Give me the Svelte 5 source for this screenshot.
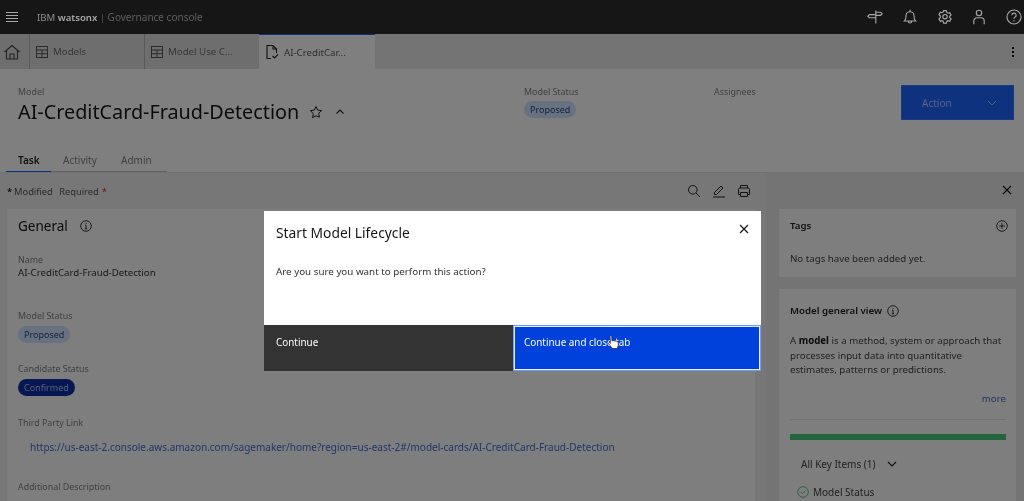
<script>
  let tabs = [
    { name: 'Models', icon: 'table' },
    { name: 'Model Use C...', icon: 'table' },
    { name: 'AI-CreditCar...', icon: 'doc', active: true }
  ];
  let pageTabs = ['Task', 'Activity', 'Admin'];
</script>

<div class="app">
  <header class="topbar">
    <svg class="menu" width="14" height="12" viewBox="0 0 14 12"><path d="M0 1.500h12M0 4.500h12M0 7.500h12M0 10.500h12" stroke="#a8a8a8" stroke-width="1"/></svg>
    <div class="brand">IBM <b>watsonx</b> <span class="bar">|</span> <span class="sub">Governance console</span></div>
    <div class="top-icons">
      <svg width="16" height="16" viewBox="0 0 20 20" fill="none" stroke="#a8a8a8" stroke-width="1.400"><path d="M11 2v16M11 4h6l2 2-2 2h-6M11 7H3L1 9l2 2h8"/></svg>
      <svg width="16" height="16" viewBox="0 0 20 20" fill="none" stroke="#a8a8a8" stroke-width="1.400"><path d="M3 15c1.800-1.500 2-3.500 2-6.500a5 5 0 0 1 10 0c0 3 .2 5 2 6.500zM8 15.500a2 2 0 0 0 4 0M10 1v2.500"/></svg>
      <svg width="16" height="16" viewBox="0 0 20 20" fill="none" stroke="#a8a8a8" stroke-width="1.400"><path d="M8.300 2.100h3.400l.5 2.200 1.500.9 2.200-.7 1.700 3-1.700 1.500v1.800l1.700 1.500-1.700 3-2.200-.7-1.500.9-.5 2.200H8.300l-.5-2.200-1.500-.9-2.200.7-1.700-3 1.700-1.500V8.400L2.400 6.900l1.700-3 2.200.7 1.500-.9z"/><circle cx="10" cy="9.600" r="2.800"/></svg>
      <svg width="16" height="16" viewBox="0 0 20 20" fill="none" stroke="#a8a8a8" stroke-width="1.400"><circle cx="10" cy="5" r="3.400"/><path d="M3.500 19v-4a4 4 0 0 1 4-4h5a4 4 0 0 1 4 4v4"/></svg>
      <svg width="16" height="16" viewBox="0 0 20 20" fill="none" stroke="#a8a8a8" stroke-width="1.400"><circle cx="10" cy="10" r="8.800"/><path d="M7.300 7.800a2.700 2.700 0 1 1 3.800 2.500c-.8.300-1.100.9-1.100 1.900M10 14v1.500"/></svg>
    </div>
  </header>

  <nav class="tabbar">
    <div class="tab home">
      <svg width="18" height="18" viewBox="0 0 18 18" fill="none" stroke="#444" stroke-width="1.100"><path d="M1.500 9 9 2.500 16.500 9M3.500 7.500V16h11V7.500M7 16v-5h4v5"/></svg>
    </div>
    {#each tabs as t}
      <div class="tab" class:active={t.active}>
        {#if t.icon === 'table'}
          <svg width="12" height="12" viewBox="0 0 12 12" fill="none" stroke="#555" stroke-width="1"><rect x=".5" y=".5" width="11" height="11"/><path d="M.5 4h11M.5 7.700h11M6 4v7.500"/></svg>
        {:else}
          <svg width="14" height="16" viewBox="0 0 14 16" fill="none" stroke="#222" stroke-width="1.100"><path d="M6 14.500H2V1.500h6l3.500 3.500v4M8 1.500V5h3.500M7.500 12l2 2 3.500-3.500"/></svg>
        {/if}
        <span>{t.name}</span>
      </div>
    {/each}
    <div class="kebab"><i></i><i></i><i></i></div>
  </nav>

  <section class="head">
    <div class="title-col">
      <div class="label">Model</div>
      <div class="title-row">
        <h1>AI-CreditCard-Fraud-Detection</h1>
        <svg width="14" height="14" viewBox="0 0 14 14" fill="none" stroke="#222" stroke-width="1"><path d="m7 1.500 1.700 3.600 3.800.5-2.800 2.700.7 3.900L7 10.800l-3.400 1.900.7-3.900L1.500 5.600l3.800-.5z"/></svg>
        <svg class="up" width="12" height="12" viewBox="0 0 12 12" fill="none" stroke="#222" stroke-width="1.100"><path d="m2.500 7.500 3.500-3.500 3.500 3.500"/></svg>
      </div>
    </div>
    <div class="status-col">
      <div class="label">Model Status</div>
      <span class="tag">Proposed</span>
    </div>
    <div class="assign-col"><div class="label">Assignees</div></div>
    <button class="action">
      <span>Action</span>
      <svg width="12" height="12" viewBox="0 0 12 12" fill="none" stroke="#b0c8ff" stroke-width="1"><path d="m2 4 4 4 4-4"/></svg>
    </button>
  </section>

  <div class="page-tabs">
    {#each pageTabs as p, i}
      <div class="ptab" class:on={i === 0}>{p}</div>
    {/each}
  </div>

  <div class="work">
    <main class="left">
      <div class="toolbar">
        <div class="legend"><b>*</b>Modified <span class="req">Required<em>*</em></span></div>
        <div class="tools">
          <svg width="14" height="14" viewBox="0 0 14 14" fill="none" stroke="#222" stroke-width="1"><circle cx="5.800" cy="5.800" r="4.300"/><path d="m9 9 4 4"/></svg>
          <svg width="14" height="14" viewBox="0 0 14 14" fill="none" stroke="#222" stroke-width="1"><path d="M1 13h12M2.500 10.500V8.500L9 2l2 2-6.500 6.500z"/></svg>
          <svg width="14" height="14" viewBox="0 0 14 14" fill="none" stroke="#222" stroke-width="1"><path d="M3.500 4V1.500h7V4M3.500 10.500H1.500V5.500a1.500 1.500 0 0 1 1.500-1.500h8a1.500 1.500 0 0 1 1.500 1.500v5h-2M3.500 8.500h7v4h-7z"/></svg>
        </div>
      </div>
      <div class="card general">
        <h2>General
          <svg width="12" height="12" viewBox="0 0 12 12" fill="none" stroke="#222" stroke-width=".9"><circle cx="6" cy="6" r="5.300"/><path d="M4.800 8.800h2.400M6 8.800V5.200H5M6 3v1"/></svg>
        </h2>
        <div class="field name"><div class="label">Name</div><div class="val">AI-CreditCard-Fraud-Detection</div></div>
        <div class="field"><div class="label">Model Status</div><span class="tag">Proposed</span></div>
        <div class="field cand"><div class="label">Candidate Status</div><span class="tag dark">Confirmed</span></div>
        <div class="field link"><div class="label">Third Party Link</div><div class="url">https://us-east-2.console.aws.amazon.com/sagemaker/home?region=us-east-2#/model-cards/AI-CreditCard-Fraud-Detection</div></div>
        <div class="label">Additional Description</div>
      </div>
    </main>
    <aside class="right">
      <div class="close-row">
        <svg width="12" height="12" viewBox="0 0 12 12" fill="none" stroke="#111" stroke-width="1.100"><path d="m2 2 8 8M10 2l-8 8"/></svg>
      </div>
      <div class="card tags">
        <div class="tags-head"><h3>Tags</h3>
          <svg width="12" height="12" viewBox="0 0 12 12" fill="none" stroke="#222" stroke-width=".9"><circle cx="6" cy="6" r="5.300"/><path d="M6 3v6M3 6h6"/></svg>
        </div>
        <p>No tags have been added yet.</p>
      </div>
      <div class="card view">
        <h3>Model general view
          <svg width="12" height="12" viewBox="0 0 12 12" fill="none" stroke="#222" stroke-width=".9"><circle cx="6" cy="6" r="5.300"/><path d="M4.800 8.800h2.400M6 8.800V5.200H5M6 3v1"/></svg>
        </h3>
        <p>A <b>model</b> is a method, system or approach that processes input data into quantitative estimates, patterns or predictions.</p>
        <div class="more">more</div>
        <div class="progress"></div>
        <div class="key">All Key Items (1)
          <svg width="12" height="12" viewBox="0 0 12 12" fill="none" stroke="#222" stroke-width="1.100"><path d="m2 4 4 4 4-4"/></svg>
        </div>
        <div class="item">
          <svg width="12" height="12" viewBox="0 0 12 12" fill="none" stroke="#4fc07a" stroke-width=".9"><circle cx="6" cy="6" r="5.300"/><path d="m3.500 6 1.800 1.800 3.200-3.200"/></svg>
          Model Status
        </div>
      </div>
    </aside>
  </div>

  <div class="overlay">
    <div class="modal">
      <div class="modal-body">
        <div class="modal-head">
          <h4>Start Model Lifecycle</h4>
          <svg width="10" height="10" viewBox="0 0 10 10" fill="none" stroke="#161616" stroke-width="1.200"><path d="m1 1 8 8M9 1 1 9"/></svg>
        </div>
        <p>Are you sure you want to perform this action?</p>
      </div>
      <div class="modal-foot">
        <button class="secondary">Continue</button>
        <button class="primary">Continue and close tab</button>
      </div>
      <svg class="cursor" width="13" height="15" viewBox="0 0 13 15"><path d="M3 1.200c.7-.7 1.600-.3 1.700.6l.2 4c1.500-.3 5.800.3 6.300 1.500.5 1.400 0 4-1 6.200H5.500L1.500 8.800c-.4-.9.700-1.600 1.600-.9l.5.500z" fill="#fff" stroke="#222" stroke-width=".7"/></svg>
    </div>
  </div>
</div>

<style>
  :global(body) {
    margin: 0;
    overflow: hidden;
  }
  .app {
    position: relative;
    width: 1024px;
    height: 501px;
    overflow: hidden;
    background: #fff;
    color: #161616;
    font-family: "Noto Sans", Roboto, sans-serif;
    font-size: 9.700px;
    filter: blur(.35px);
  }
  .topbar {
    display: flex;
    align-items: center;
    height: 34px;
    background: #161616;
  }
  .menu {
    margin-left: 6px;
  }
  .brand {
    margin-left: 17px;
    font-size: 9.600px;
    color: #8f8f8f;
  }
  .brand b {
    font-weight: 600;
    color: #a8a8a8;
  }
  .brand .bar {
    color: #555;
  }
  .brand .sub {
    color: #5f5f5f;
    font-size: 10px;
  }
  .top-icons {
    display: flex;
    gap: 18.700px;
    margin-left: auto;
    margin-right: 2px;
  }
  .tabbar {
    display: flex;
    height: 35px;
    background: #e9e9e9;
    align-items: stretch;
  }
  .tab {
    display: flex;
    align-items: center;
    gap: 5px;
    width: 115px;
    padding-left: 6px;
    box-sizing: border-box;
    background: #dcdcdc;
    border-left: 1px solid #b5b5b5;
    color: #6f6f6f;
  }
  .tab.home {
    width: 29px;
    padding-left: 3px;
    border-left: none;
  }
  .tab.active {
    width: 116px;
    background: #fff;
    border-left: none;
    border-top: 1px solid #0f62fe;
    color: #5a5a5a;
  }
  .kebab {
    margin-left: auto;
    margin-right: 10px;
    display: flex;
    flex-direction: column;
    justify-content: center;
    gap: 2px;
  }
  .kebab i {
    display: block;
    width: 2px;
    height: 2px;
    background: #111;
  }
  .head {
    display: flex;
    height: 70px;
    padding: 17px 10px 0 18px;
    box-sizing: border-box;
  }
  .label {
    font-size: 8.900px;
    color: #808080;
    line-height: 13px;
    margin-top: -1px;
  }
  .title-col {
    width: 506px;
  }
  .title-row {
    display: flex;
    align-items: center;
    gap: 10px;
    margin-top: 1px;
  }
  .title-row .up {
    margin-left: 1px;
  }
  h1 {
    margin: 0;
    font-size: 19.800px;
    line-height: 26px;
    font-weight: 400;
  }
  .status-col {
    width: 190px;
  }
  .assign-col {
    width: 187px;
  }
  .tag {
    display: inline-block;
    height: 17px;
    line-height: 17px;
    padding: 0 6px;
    border-radius: 9px;
    margin-top: 3px;
    font-size: 9px;
    background: #d0e2ff;
    color: #2a4a80;
  }
  .field .tag {
    margin-top: 4px;
  }
  .tag.dark {
    background: #0f2ea8;
    color: #a0c0f0;
  }
  .action {
    display: flex;
    align-items: center;
    justify-content: space-between;
    width: 113px;
    height: 35px;
    padding: 0 15px 0 20px;
    margin-top: -1px;
    border: 1px solid #3a70ff;
    background: #1e64ff;
    color: #b0c8ff;
    font: inherit;
    font-size: 10px;
  }
  .page-tabs {
    display: flex;
    height: 33px;
    padding-left: 6px;
    box-sizing: border-box;
    align-items: stretch;
  }
  .ptab {
    width: 58px;
    padding: 14px 0 0 12px;
    box-sizing: border-box;
    border-bottom: 1px solid #c6c6c6;
    color: #808080;
    font-size: 10px;
  }
  .ptab.on {
    width: 45px;
    font-weight: 600;
    color: #222;
    border-bottom: 1px solid #0f62fe;
  }
  .work {
    display: flex;
    background: #efefef;
    height: 329px;
    border-top: 1px solid #e4e4e4;
  }
  .left {
    width: 766px;
    padding: 0 11px 0 7px;
    box-sizing: border-box;
  }
  .toolbar {
    display: flex;
    justify-content: space-between;
    align-items: center;
    height: 36px;
  }
  .legend {
    color: #555;
    font-size: 9.300px;
  }
  .legend b {
    font-weight: 600;
    color: #161616;
    margin-right: 2px;
  }
  .legend .req {
    margin-left: 4px;
  }
  .legend em {
    color: #da1e28;
    font-style: normal;
    margin-left: 3px;
  }
  .tools {
    display: flex;
    gap: 11px;
    margin-right: 4px;
  }
  .card {
    background: #fcfcfc;
  }
  .general {
    padding: 8px 11px;
    height: 300px;
    box-sizing: border-box;
  }
  h2 {
    display: flex;
    align-items: center;
    gap: 12px;
    margin: 0 0 19px;
    font-size: 13.500px;
    line-height: 18px;
    font-weight: 400;
  }
  .field {
    height: 53.500px;
  }
  .field.name {
    height: 57px;
  }
  .field.cand {
    height: 55.500px;
  }
  .val {
    margin-top: 0;
    color: #333;
  }
  .field.link {
    height: 65px;
  }
  .url {
    margin: 11px 0 0 12px;
    color: #3f6fd8;
    white-space: nowrap;
    font-size: 10px;
  }
  .right {
    flex: 1;
    background: #e8e8e8;
    padding: 0 8px 0 13px;
    box-sizing: border-box;
  }
  .close-row {
    display: flex;
    justify-content: flex-end;
    align-items: center;
    height: 34px;
    padding-right: 3px;
    margin-bottom: 2px;
  }
  .tags {
    padding: 10px 8px 0 11px;
    height: 68px;
    box-sizing: border-box;
    margin-bottom: 12px;
    color: #444;
  }
  .tags-head {
    display: flex;
    justify-content: space-between;
    align-items: center;
  }
  h3 {
    display: flex;
    align-items: center;
    gap: 5px;
    margin: 0;
    font-size: 9.700px;
    line-height: 14px;
    font-weight: 600;
    color: #222;
  }
  .tags p {
    margin: 19px 0 0;
  }
  .view {
    padding: 15px 10px 0 11px;
    height: 240px;
    box-sizing: border-box;
    color: #444;
  }
  .view p {
    margin: 16px 0 0;
    line-height: 14.500px;
  }
  .view p b {
    color: #161616;
  }
  .more {
    text-align: right;
    color: #3f6fd8;
    margin-top: 14px;
    padding-bottom: 14px;
    border-bottom: 1px solid #e4e4e4;
  }
  .progress {
    height: 6px;
    background: #48c878;
    margin-top: 14px;
  }
  .key {
    display: flex;
    align-items: center;
    gap: 10px;
    padding-left: 11px;
    margin-top: 17px;
    font-size: 10px;
  }
  .item {
    display: flex;
    align-items: center;
    gap: 4px;
    margin: 14px 0 0 7px;
    font-size: 10px;
  }
  .overlay {
    position: absolute;
    inset: 34px 0 0 0;
    background: rgba(0, 0, 0, .5);
    padding: 177px 0 0 264px;
    box-sizing: border-box;
  }
  .modal {
    position: relative;
    width: 497px;
    color: #161616;
  }
  .modal-body {
    height: 114px;
    background: #fff;
    padding: 13px 12px;
    box-sizing: border-box;
  }
  .modal-head {
    display: flex;
    justify-content: space-between;
    align-items: flex-start;
  }
  h4 {
    margin: 0;
    font-size: 13.800px;
    line-height: 17px;
    font-weight: 400;
  }
  .modal-body p {
    margin: 24px 0 0;
    font-size: 9.800px;
    color: #333;
  }
  .modal-foot {
    display: flex;
    height: 46px;
  }
  .modal-foot button {
    flex: 1;
    display: flex;
    align-items: flex-start;
    font: inherit;
    font-size: 9.900px;
    color: #fff;
    border: none;
    padding: 11px 10px 0 12px;
    line-height: 12px;
  }
  .secondary {
    background: #333;
  }
  .primary {
    background: #0041dc;
    outline: 1px solid #6f9cf5;
    outline-offset: -1px;
    box-shadow: inset 0 0 0 2px #e8eefc;
  }
  .modal-foot .primary {
    padding-left: 11px;
  }
  .cursor {
    position: absolute;
    left: 343px;
    top: 124px;
  }
</style>
